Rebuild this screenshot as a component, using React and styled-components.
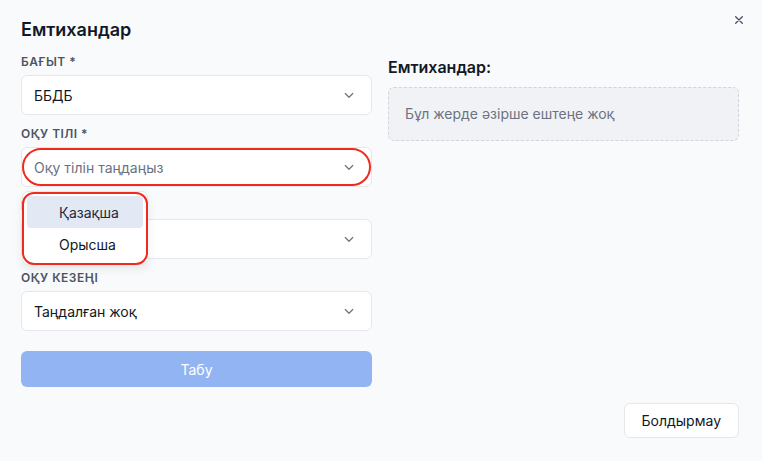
import styled, { createGlobalStyle } from 'styled-components';

const GlobalStyle = createGlobalStyle`
  body {
    margin: 0;
    background: #f9fafb;
    font-family: Inter, "Noto Sans", sans-serif;
    color: #111827;
  }
`;

const Dialog = styled.div`
  position: relative;
  width: 762px;
  height: 461px;
  box-sizing: border-box;
  padding: 16px 23px 0 21px;
  background: #f9fafb;
`;

const Title = styled.h2`
  margin: 0;
  font-size: 18px;
  line-height: 28px;
  font-weight: 600;
  color: #111827;
`;

const CloseButton = styled.button`
  position: absolute;
  top: 12px;
  right: 15px;
  width: 16px;
  height: 16px;
  padding: 0;
  border: none;
  background: none;
  color: #4b5563;
  display: flex;
  align-items: center;
  justify-content: center;
`;

const Columns = styled.div`
  display: grid;
  grid-template-columns: 351px 351px;
  gap: 16px;
  margin-top: 10px;
`;

const Form = styled.div`
  display: flex;
  flex-direction: column;
  gap: 11px;
`;

const Field = styled.div`
  position: relative;
  display: flex;
  flex-direction: column;
  gap: 5px;
`;

const Label = styled.label`
  font-size: 12px;
  line-height: 16px;
  font-weight: 600;
  letter-spacing: 0.04em;
  text-transform: uppercase;
  color: #4b5563;
`;

const Select = styled.div`
  height: 40px;
  box-sizing: border-box;
  display: flex;
  align-items: center;
  justify-content: space-between;
  padding: 0 13px 0 12px;
  background: #fff;
  border: 1px solid #e5e7eb;
  border-radius: 6px;
  font-size: 14px;
  color: ${(p) => (p.$placeholder ? '#6b7280' : '#111827')};
`;

const Ring = styled.div`
  position: absolute;
  pointer-events: none;
  border: 2px solid #ef2b1f;
  box-sizing: border-box;
`;

const SelectRing = styled(Ring)`
  left: 1px;
  right: 1px;
  bottom: 1px;
  height: 38px;
  border-radius: 19px;
`;

const Menu = styled.div`
  position: absolute;
  left: 1px;
  top: calc(100% + 4px);
  width: 126px;
  box-sizing: border-box;
  padding: 4px;
  background: #fff;
  border: 1px solid #e5e7eb;
  border-radius: 6px;
  box-shadow: 0 4px 10px rgba(0, 0, 0, 0.08);
  z-index: 2;
`;

const MenuRing = styled(Ring)`
  left: -1px;
  right: -1px;
  top: 0;
  bottom: -1px;
  border-radius: 12px;
`;

const MenuItem = styled.div`
  height: 32px;
  display: flex;
  align-items: center;
  padding-left: 32px;
  border-radius: 4px;
  font-size: 14px;
  color: ${(p) => (p.$active ? '#1e293b' : '#111827')};
  background: ${(p) => (p.$active ? '#e2e8f4' : 'transparent')};
`;

const SearchButton = styled.button`
  margin-top: 9px;
  height: 36px;
  border: none;
  border-radius: 6px;
  background: #93b4f3;
  color: #fff;
  font-family: inherit;
  font-size: 14px;
`;

const Side = styled.div`
  display: flex;
  flex-direction: column;
  gap: 8px;
`;

const SideTitle = styled.h3`
  margin: 1px 0 0;
  font-size: 16px;
  line-height: 24px;
  font-weight: 600;
`;

const Empty = styled.div`
  padding: 16px;
  line-height: 20px;
  background: #f1f2f5;
  border: 1px dashed #d1d5db;
  border-radius: 6px;
  font-size: 14px;
  color: #6b7280;
`;

const Footer = styled.div`
  display: flex;
  justify-content: flex-end;
  margin-top: 16px;
`;

const CancelButton = styled.button`
  height: 35px;
  padding: 0 17px;
  background: #fff;
  border: 1px solid #e5e7eb;
  border-radius: 6px;
  font-family: inherit;
  font-size: 14px;
  color: #111827;
`;

const Chevron = () => (
  <svg width="18" height="18" viewBox="0 0 24 24" fill="none" stroke="#6b7280" strokeWidth="1.6" strokeLinecap="round" strokeLinejoin="round">
    <path d="m7 10 5 5 5-5" />
  </svg>
);

export default function App() {
  return (
    <>
      <GlobalStyle />
      <Dialog>
        <Title>Емтихандар</Title>
        <CloseButton>
          <svg width="16" height="16" viewBox="0 0 24 24" fill="none" stroke="currentColor" strokeWidth="2" strokeLinecap="round">
            <path d="M17 7 7 17M7 7l10 10" />
          </svg>
        </CloseButton>
        <Columns>
          <Form>
            <Field>
              <Label>Бағыт *</Label>
              <Select>
                ББДБ
                <Chevron />
              </Select>
            </Field>
            <Field>
              <Label>Оқу тілі *</Label>
              <Select $placeholder>
                Оқу тілін таңдаңыз
                <Chevron />
              </Select>
              <SelectRing />
              <Menu>
                <MenuItem $active>Қазақша</MenuItem>
                <MenuItem>Орысша</MenuItem>
                <MenuRing />
              </Menu>
            </Field>
            <Field>
              <Label>Курс</Label>
              <Select>
                <span />
                <Chevron />
              </Select>
            </Field>
            <Field>
              <Label>Оқу кезеңі</Label>
              <Select>
                Таңдалған жоқ
                <Chevron />
              </Select>
            </Field>
            <SearchButton>Табу</SearchButton>
          </Form>
          <Side>
            <SideTitle>Емтихандар:</SideTitle>
            <Empty>Бұл жерде әзірше ештеңе жоқ</Empty>
          </Side>
        </Columns>
        <Footer>
          <CancelButton>Болдырмау</CancelButton>
        </Footer>
      </Dialog>
    </>
  );
}
